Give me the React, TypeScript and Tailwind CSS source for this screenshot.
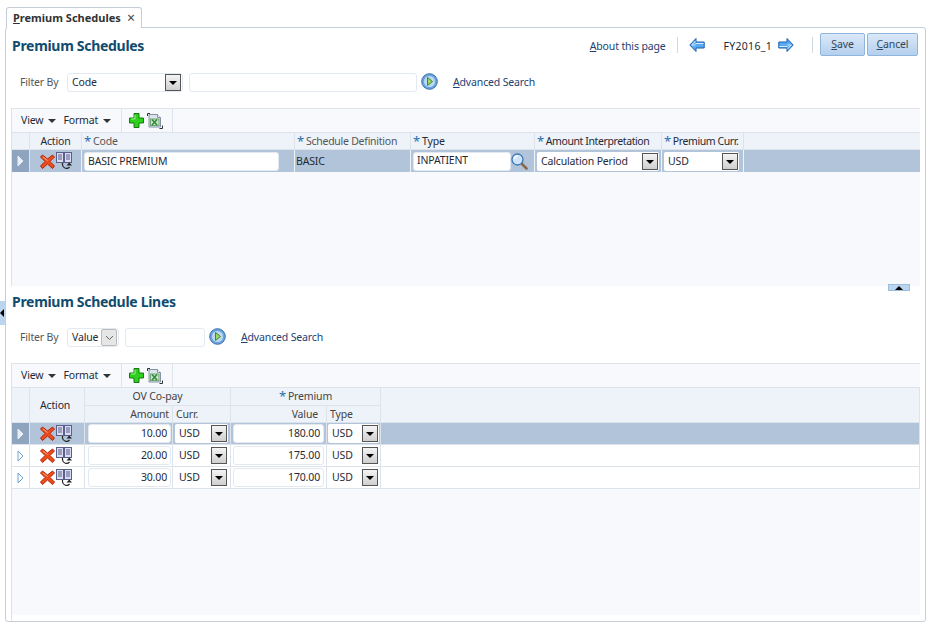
import React from "react";

const font = "font-['Noto_Sans',Arial,sans-serif]";

const DeleteIcon = () => (
  <svg width="15" height="15" viewBox="0 0 15 15" className="shrink-0">
    <path d="M2.500 1 L7.500 5 L12.500 1 L14.500 3 L10 7.500 L14.500 12 L12.500 14.500 L7.500 10 L2.500 14.500 L.5 12 L5 7.500 L.5 3 Z" fill="#ee4a1c" stroke="#a82c10" strokeWidth="1" strokeLinejoin="round" />
    <path d="M3 3l4.500 3.500" stroke="#ffb090" strokeWidth="1" />
  </svg>
);

const DuplicateIcon = () => (
  <svg width="17" height="18" viewBox="0 0 17 18" className="shrink-0">
    <rect x=".5" y=".5" width="7" height="10" fill="#d9dcf2" stroke="#5a5f88" />
    <rect x="8.500" y=".5" width="7" height="10" fill="#d9dcf2" stroke="#5a5f88" />
    <path d="M2 3h4M2 5h4M2 7h4M10 3h4M10 5h4M10 7h4" stroke="#5a5f88" strokeWidth="1" />
    <path d="M6.500 11v2a4 4 0 0 0 7 2" fill="none" stroke="#222" strokeWidth="1.200" />
    <path d="M10.500 13.500h5.500l-2.700-3z" fill="#222" />
  </svg>
);

const AddIcon = () => (
  <svg width="15" height="15" viewBox="0 0 15 15">
    <path d="M5 .5h5v4.500h4.500v5H10v4.500H5V10H.5V5H5z" fill="#2fd01c" stroke="#157a10" strokeLinejoin="round" />
    <path d="M6 2v4H2" fill="none" stroke="#a4f090" />
  </svg>
);

const ExcelIcon = () => (
  <svg width="16" height="16" viewBox="0 0 16 16">
    <path d="M.5 3V.5H3M15.500 12.500v3H12.500" fill="none" stroke="#333" />
    <path d="M2 1.500h8.500l3 3v9.500H2z" fill="#dde4ee" stroke="#8492a6" />
    <path d="M10.500 1.500v3h3" fill="#fff" stroke="#8492a6" />
    <rect x="3.500" y="6" width="8.500" height="6.500" fill="#cfe3cf" stroke="#6fa86f" />
    <path d="M5 6.500l5 5.500M10 6.500l-5 5.500" stroke="#2f8a3a" strokeWidth="1.600" />
  </svg>
);

const GoIcon = () => (
  <svg width="17" height="17" viewBox="0 0 17 17" className="shrink-0">
    <circle cx="8.500" cy="8.500" r="7.800" fill="#6aa5e2" stroke="#3a6ea8" />
    <circle cx="8.500" cy="8.500" r="5.500" fill="#bcd9f2" />
    <path d="M6.500 4.500l5 4-5 4z" fill="#9fd468" stroke="#3c8a2e" />
  </svg>
);

const SearchIcon = () => (
  <svg width="17" height="17" viewBox="0 0 17 17" className="shrink-0">
    <path d="M10 10l5.500 5.500" stroke="#8a6a4a" strokeWidth="2.600" strokeLinecap="round" />
    <circle cx="6.500" cy="6.500" r="5.500" fill="#cfe4f8" stroke="#3f76b4" strokeWidth="1.300" />
    <path d="M3.500 6a3 3 0 0 1 3-3" fill="none" stroke="#fff" strokeWidth="1.300" />
  </svg>
);

const ArrowIcon = ({ left }: { left?: boolean }) => (
  <svg width="16" height="14" viewBox="0 0 16 14" className={left ? "shrink-0" : "shrink-0 rotate-180"}>
    <path d="M7 .5L.8 7 7 13.500V10h8.200V4H7z" fill="#58aaf2" stroke="#1a5eaa" strokeLinejoin="round" />
    <path d="M6.500 3L2.800 7h3.700M6.500 5.500h8" fill="none" stroke="#d4ebff" />
  </svg>
);

const RowArrow = ({ active }: { active?: boolean }) => (
  <svg width="7" height="12" viewBox="0 0 7 12">
    <path d="M1 1l5 5-5 5z" fill={active ? "#e8eff8" : "#ffffff"} stroke={active ? "#e8eff8" : "#6ea3d8"} />
  </svg>
);

const DropBtn = () => (
  <span className="flex h-[17px] w-[16px] shrink-0 items-center justify-center border border-[#555] bg-gradient-to-b from-[#f4f4f4] to-[#cfcfcf]">
    <span className="mt-[1px] h-0 w-0 border-x-[4px] border-t-[4px] border-x-transparent border-t-black" />
  </span>
);

const Select = ({ value, width, flat }: { value: string; width: string; flat?: boolean }) => (
  <div className={`flex h-[19px] items-center justify-between rounded-[2px] bg-white pl-[4px] pr-[1px] text-[#1f2a36] ${width}`}>
    <span className={flat ? "" : "-mt-[1px]"}>{value}</span>
    <DropBtn />
  </div>
);

const Input = ({ value, width, right, flat }: { value?: string; width: string; right?: boolean; flat?: boolean }) => (
  <div className={`flex h-[19px] items-center rounded-[3px] border border-[#e3e9f0] bg-white px-[3px] text-[#1f2a36] ${width} ${right ? "justify-end" : ""}`}>
    <span className={flat ? "" : "-mt-[1px]"}>{value}</span>
  </div>
);

const Star = () => <span className="mr-[2px] text-[13px] leading-none text-[#1f6fb0]">*</span>;

const Toolbar = () => (
  <div className="flex h-[24px] items-stretch border-t border-[#dfe4ea] bg-[#f7f9fd] text-[#1f2a36]">
    <div className="flex w-[110px] items-center gap-[7px] border-r border-[#dfe4ea] pl-[9px]">
      <span className="flex items-center gap-[5px]">
        <span className="-mt-[1px]">View</span>
        <span className="h-0 w-0 border-x-[4px] border-t-[4px] border-x-transparent border-t-[#333]" />
      </span>
      <span className="flex items-center gap-[5px]">
        <span className="-mt-[1px]">Format</span>
        <span className="h-0 w-0 border-x-[4px] border-t-[4px] border-x-transparent border-t-[#333]" />
      </span>
    </div>
    <div className="flex w-[51px] items-center gap-[3px] border-r border-[#dfe4ea] pl-[7px]">
      <AddIcon />
      <ExcelIcon />
    </div>
  </div>
);

const Actions = () => (
  <div className="flex w-full items-center gap-[1px] pl-[10px]">
    <DeleteIcon />
    <DuplicateIcon />
  </div>
);

const Link = ({ first, rest }: { first: string; rest: string }) => (
  <span className="whitespace-nowrap text-[#1d3f73]">
    <span className="underline">{first}</span>
    {rest}
  </span>
);

const Cell = ({ className, children }: { className: string; children?: React.ReactNode }) => (
  <div className={`flex shrink-0 items-center whitespace-nowrap border-r border-[#dde3ea] ${className}`}>{children}</div>
);

const lines = [
  { amount: "10.00", value: "180.00", active: true },
  { amount: "20.00", value: "175.00" },
  { amount: "30.00", value: "170.00" },
];

const App = () => {
  return (
    <div className={`relative h-[627px] w-[930px] overflow-hidden bg-white text-[10.500px] leading-none tracking-[-0.15px] ${font}`}>
      {/* Tab strip */}
      <div className="flex h-[27px] items-end pl-[6px]">
        <div className="relative top-[1px] z-10 flex h-[21px] w-[136px] items-center justify-between rounded-t-[3px] border border-b-0 border-[#c5ced6] bg-white px-[6px] text-[11px] font-bold tracking-normal text-[#333]">
          <span className="-mt-[2px] whitespace-nowrap">
            <span className="underline">P</span>remium Schedules
          </span>
          <span className="text-[14px] font-normal text-[#444]">×</span>
        </div>
      </div>

      {/* Panel */}
      <div className="ml-[5px] flex h-[595px] w-[921px] flex-col rounded-[3px] border border-[#c5ced6] px-[5px]">
        {/* Page header */}
        <div className="flex h-[45px] items-start justify-between">
          <h1 className="pl-[1px] pt-[11px] text-[14px] font-bold leading-none tracking-[-0.3px] text-[#0f4c6e]">Premium Schedules</h1>
          <div className="flex items-center pt-[5px] pr-[2px] text-[#1f2a36]">
            <span className="pt-[4px]">
              <Link first="A" rest="bout this page" />
            </span>
            <span className="mx-[11px] h-[16px] w-px bg-[#d0d8e0]" />
            <ArrowIcon left />
            <span className="ml-[19px] mr-[6px] pt-[3px] tracking-[0.3px]">FY2016_1</span>
            <ArrowIcon />
            <span className="ml-[18px] mr-[7px] h-[16px] w-px bg-[#d0d8e0]" />
            <div className="flex gap-[2px]">
              <button className="h-[23px] w-[45px] rounded-[2px] border border-[#8fb5dc] bg-gradient-to-b from-[#dbe9f8] to-[#b3d0ee] text-[#33475b]">
                <span className="underline">S</span>ave
              </button>
              <button className="h-[23px] w-[51px] rounded-[2px] border border-[#8fb5dc] bg-gradient-to-b from-[#dbe9f8] to-[#b3d0ee] text-[#33475b]">
                <span className="underline">C</span>ancel
              </button>
            </div>
          </div>
        </div>

        {/* Filter */}
        <div className="flex h-[35px] items-start text-[#1f2a36]">
          <span className="w-[56px] whitespace-nowrap pl-[9px] pt-[4px] text-[#555]">Filter By</span>
          <div className="flex h-[19px] w-[116px] items-center justify-between rounded-[3px] border border-[#e3e9f0] bg-white pl-[4px] pr-[1px]">
            <span className="-mt-[1px]">Code</span>
            <DropBtn />
          </div>
          <div className="ml-[6px] mr-[4px]">
            <Input width="w-[228px]" />
          </div>
          <GoIcon />
          <span className="ml-[15px] pt-[4px]">
            <Link first="A" rest="dvanced Search" />
          </span>
        </div>

        {/* Top table */}
        <div className="w-[909px] border-l border-[#dde3ea]">
          <Toolbar />
          <div className="h-[154px] bg-[#f7f9fd]">
            <div className="flex h-[18px] border-y border-[#dde3ea] bg-[#eef2f9] text-[#1f2a36]">
              <Cell className="w-[18px]" />
              <Cell className="w-[52px] justify-center">Action</Cell>
              <Cell className="w-[213px] pl-[2px] text-[#555]"><Star />Code</Cell>
              <Cell className="w-[116px] pl-[2px] tracking-[-0.25px] text-[#555]"><Star />Schedule Definition</Cell>
              <Cell className="w-[124px] pl-[2px]"><Star />Type</Cell>
              <Cell className="w-[127px] pl-[2px] tracking-[-0.4px]"><Star />Amount Interpretation</Cell>
              <Cell className="w-[82px] pl-[2px] tracking-[-0.4px]"><Star />Premium Curr.</Cell>
            </div>
            <div className="flex h-[22px] bg-[#b1c4da] text-[#1f2a36]">
              <Cell className="w-[18px] justify-center bg-[#8ea4bf]"><RowArrow active /></Cell>
              <Cell className="w-[52px] border-[#eef2f9]"><Actions /></Cell>
              <Cell className="w-[213px] border-[#eef2f9] pl-[2px]"><Input value="BASIC PREMIUM" width="w-[195px]" flat /></Cell>
              <Cell className="w-[116px] border-[#eef2f9] pl-[1px]">BASIC</Cell>
              <Cell className="w-[124px] justify-between border-[#eef2f9] pl-[2px] pr-[6px]">
                <Input value="INPATIENT" width="w-[98px]" />
                <SearchIcon />
              </Cell>
              <Cell className="w-[127px] border-[#eef2f9] pl-[2px]"><Select value="Calculation Period" width="w-[122px]" flat /></Cell>
              <Cell className="w-[82px] border-[#eef2f9] pl-[2px]"><Select value="USD" width="w-[75px]" flat /></Cell>
            </div>
          </div>
        </div>

        {/* Lines section */}
        <h2 className="pl-[1px] pt-[9px] text-[14px] font-bold leading-none tracking-[-0.3px] text-[#0f4c6e]">Premium Schedule Lines</h2>
        <div className="flex h-[46px] items-start pt-[19px] text-[#1f2a36]">
          <span className="w-[56px] whitespace-nowrap pl-[9px] pt-[4px] text-[#555]">Filter By</span>
          <div className="flex h-[19px] w-[52px] items-center justify-between rounded-[3px] border border-[#e3e9f0] bg-white pl-[4px] pr-[1px]">
            <span className="-mt-[1px]">Value</span>
            <span className="flex h-[17px] w-[16px] items-center justify-center rounded-[2px] border border-[#bbb] bg-[#e6e6e6]">
              <svg width="9" height="6" viewBox="0 0 9 6"><path d="M1 1l3.500 3.500L8 1" fill="none" stroke="#666" /></svg>
            </span>
          </div>
          <div className="ml-[6px] mr-[4px]">
            <Input width="w-[80px]" />
          </div>
          <GoIcon />
          <span className="ml-[15px] pt-[4px]">
            <Link first="A" rest="dvanced Search" />
          </span>
        </div>

        {/* Bottom table */}
        <div className="mt-[8px] w-[909px] flex-1 border-l border-[#dde3ea]">
          <Toolbar />
          <div className="h-[228px] bg-[#f7f9fd]">
            <div className="flex h-[36px] border-y border-r border-[#dde3ea] bg-[#eef2f9] text-[#444]">
              <Cell className="w-[18px]" />
              <Cell className="w-[55px] justify-start pl-[10px] text-[#1f2a36]">Action</Cell>
              <div className="flex w-[146px] shrink-0 flex-col border-r border-[#dde3ea]">
                <div className="flex h-[18px] items-center justify-center border-b border-[#dde3ea]">OV Co-pay</div>
                <div className="flex flex-1">
                  <Cell className="w-[88px] justify-end pr-[3px]">Amount</Cell>
                  <div className="flex items-center pl-[3px]">Curr.</div>
                </div>
              </div>
              <div className="flex w-[150px] shrink-0 flex-col border-r border-[#dde3ea]">
                <div className="flex h-[18px] items-center justify-center border-b border-[#dde3ea]"><Star />Premium</div>
                <div className="flex flex-1">
                  <Cell className="w-[96px] justify-end pr-[8px]">Value</Cell>
                  <div className="flex items-center pl-[3px]">Type</div>
                </div>
              </div>
            </div>
            {lines.map((line) => (
              <div key={line.amount} className={`flex h-[22px] border-b border-[#dde3ea] text-[#1f2a36] ${line.active ? "bg-[#b1c4da]" : "bg-white"}`}>
                <Cell className={`w-[18px] justify-center ${line.active ? "bg-[#8ea4bf]" : ""}`}><RowArrow active={line.active} /></Cell>
                <Cell className="w-[55px]"><Actions /></Cell>
                <Cell className="w-[88px] pl-[3px]"><Input value={line.amount} width="w-[83px]" right /></Cell>
                <Cell className="w-[58px] pl-[2px]"><Select value="USD" width="w-[53px]" /></Cell>
                <Cell className="w-[96px] pl-[2px]"><Input value={line.value} width="w-[91px]" right /></Cell>
                <Cell className="w-[54px] pl-[1px]"><Select value="USD" width="w-[51px]" /></Cell>
                <div className="flex-1 border-r border-[#dde3ea]" />
              </div>
            ))}
          </div>
        </div>
      </div>

      {/* Splitter handles */}
      <div className="absolute left-0 top-[301px] flex h-[24px] w-[5px] items-center bg-[#bcd5ee]">
        <span className="h-0 w-0 border-y-[4px] border-r-[4px] border-y-transparent border-r-black" />
      </div>
      <div className="absolute left-[888px] top-[284px] flex h-[7px] w-[22px] items-center justify-center border border-[#9cbde0] bg-[#bcd5ee]">
        <span className="h-0 w-0 border-x-[4px] border-b-[4px] border-x-transparent border-b-black" />
      </div>
    </div>
  );
};

export default App;
